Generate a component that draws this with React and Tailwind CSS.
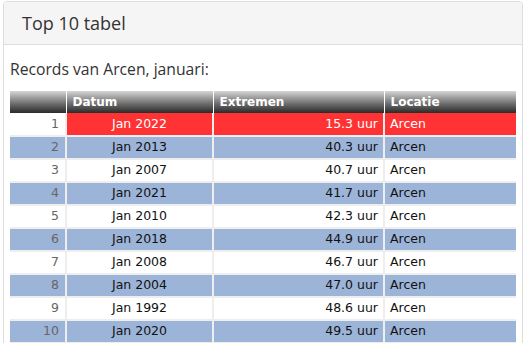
const rows = [
  { nr: 1, datum: "Jan 2022", waarde: "15.3 uur", locatie: "Arcen" },
  { nr: 2, datum: "Jan 2013", waarde: "40.3 uur", locatie: "Arcen" },
  { nr: 3, datum: "Jan 2007", waarde: "40.7 uur", locatie: "Arcen" },
  { nr: 4, datum: "Jan 2021", waarde: "41.7 uur", locatie: "Arcen" },
  { nr: 5, datum: "Jan 2010", waarde: "42.3 uur", locatie: "Arcen" },
  { nr: 6, datum: "Jan 2018", waarde: "44.9 uur", locatie: "Arcen" },
  { nr: 7, datum: "Jan 2008", waarde: "46.7 uur", locatie: "Arcen" },
  { nr: 8, datum: "Jan 2004", waarde: "47.0 uur", locatie: "Arcen" },
  { nr: 9, datum: "Jan 1992", waarde: "48.6 uur", locatie: "Arcen" },
  { nr: 10, datum: "Jan 2020", waarde: "49.5 uur", locatie: "Arcen" },
];

const App = () => {
  return (
    <div className="w-[524px] h-[343px] overflow-hidden bg-white pl-[3px] pr-px pt-px">
      <div className="border border-[#dddddd] rounded-t-[4px] bg-white h-[400px]">
        {/* paneel kop */}
        <div className="h-[43px] bg-[#f5f5f5] border-b border-[#dddddd] rounded-t-[3px] pl-[18px] flex items-center font-['Open_Sans',sans-serif] text-[18px] text-[#333333]">
          Top 10 tabel
        </div>

        <div className="px-[6px]">
          <div className="h-[46px] pt-[14px] font-['Open_Sans',sans-serif] text-[15.7px] leading-[20px] text-[#333333]">
            Records van Arcen, januari:
          </div>

          <table className="w-full border-collapse font-['DejaVu_Sans',Verdana,sans-serif] text-[12.5px]">
            <thead>
              <tr className="h-[22px] bg-gradient-to-b from-[#d6d6d6] to-[#2b2b2b] text-white text-left text-[12px]">
                <th className="w-[56px] border-r border-white"></th>
                <th className="w-[147px] border-r border-white pl-[6px] font-bold">Datum</th>
                <th className="w-[171px] border-r border-white pl-[6px] font-bold">Extremen</th>
                <th className="pl-[6px] font-bold">Locatie</th>
              </tr>
            </thead>
            <tbody>
              {rows.map((r, i) => {
                const first = i === 0;
                const even = i % 2 === 1;
                const rowBg = first
                  ? "bg-[#ff3333] text-white"
                  : even
                  ? "bg-[#9db4d9] text-[#111111]"
                  : "bg-white text-[#111111]";
                return (
                  <tr key={r.nr} className="h-[23px] border-b-2 border-[#eeeeee]">
                    <td
                      className={`text-right pr-[6px] text-[#666666] border-r-2 border-[#eeeeee] ${
                        even ? "bg-[#9db4d9]" : "bg-white"
                      }`}
                    >
                      {r.nr}
                    </td>
                    <td className={`text-center border-r-2 border-[#eeeeee] ${rowBg}`}>{r.datum}</td>
                    <td className={`text-right pr-[5px] border-r-2 border-[#eeeeee] ${rowBg}`}>{r.waarde}</td>
                    <td className={`pl-[5px] ${rowBg}`}>{r.locatie}</td>
                  </tr>
                );
              })}
            </tbody>
          </table>
        </div>
      </div>
    </div>
  );
};

export default App;
